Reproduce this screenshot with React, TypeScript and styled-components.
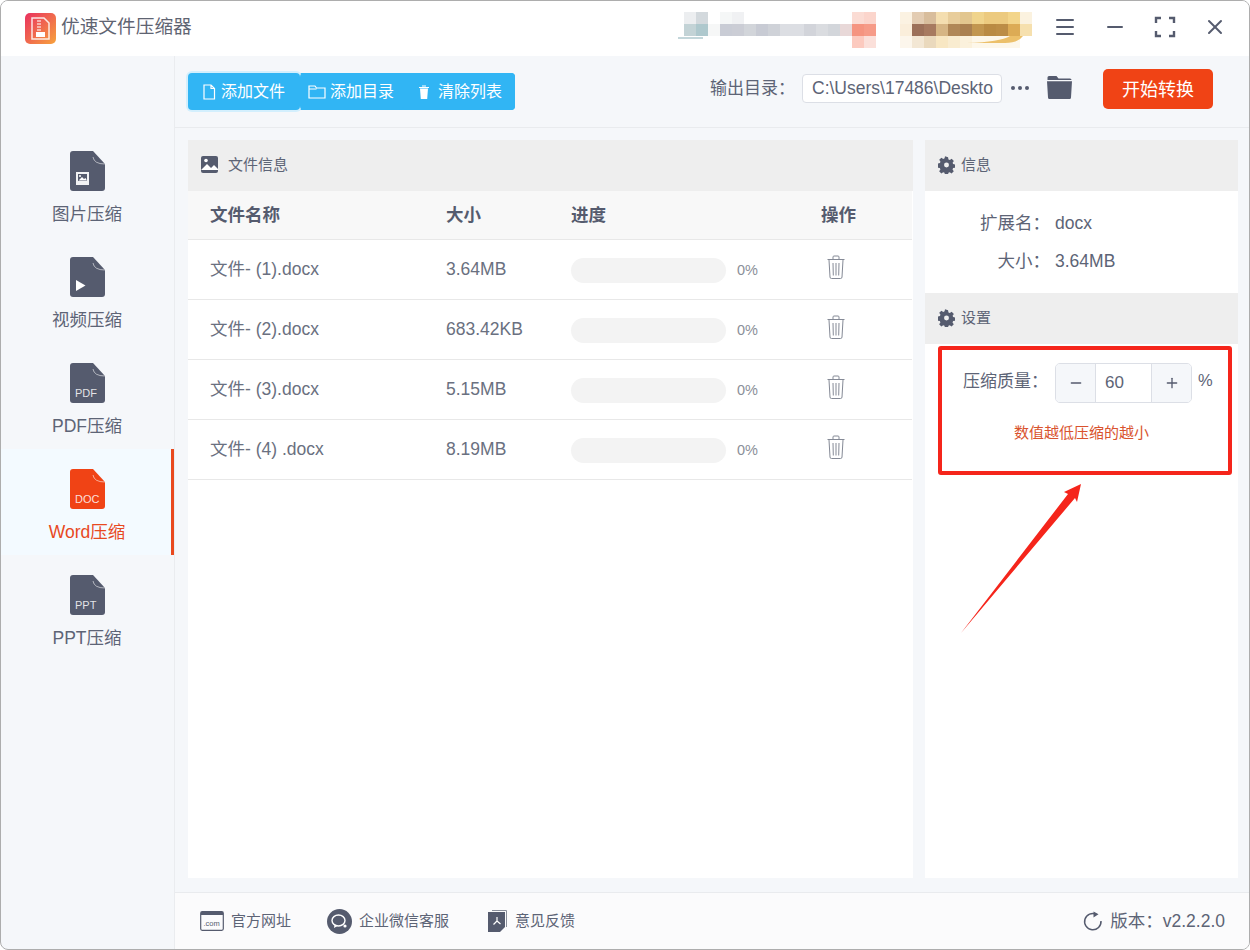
import React from 'react';
import styled, { createGlobalStyle } from 'styled-components';
import { Menu, Minus, X, Plus } from 'lucide-react';

const GlobalStyle = createGlobalStyle`
  html, body {
    margin: 0;
    padding: 0;
    background: #fff;
  }
  body {
    font-family: "Liberation Sans", "Noto Sans CJK SC", sans-serif;
    color: #555b6e;
  }
  * { box-sizing: border-box; }
`;

const Window = styled.div`
  position: relative;
  width: 1250px;
  height: 950px;
  display: flex;
  flex-direction: column;
  overflow: hidden;
  background: #f5f7fa;
  border: 1px solid #adadad;
  border-radius: 8px;
`;

const TitleBar = styled.header`
  height: 55px;
  flex: none;
  display: flex;
  align-items: center;
  background: #fff;
  padding: 0 22px 0 24px;
`;

const Logo = styled.div`
  width: 31px;
  height: 31px;
  flex: none;
  border-radius: 5px;
  display: flex;
  align-items: center;
  justify-content: center;
  background: linear-gradient(135deg, #e9305f, #f7a33d);
`;

const AppName = styled.div`
  margin: 0 0 4px 5px;
  font-size: 18.7px;
  line-height: 26px;
  color: #5f6472;
`;

const Mosaic = styled.svg`
  margin: 3px 0 0 auto;
  flex: none;
`;

const WinControls = styled.div`
  display: flex;
  align-items: center;
  margin: 0 0 3px 13px;
  gap: 26px;
  color: #555b6e;
`;

const Body = styled.div`
  flex: 1;
  display: flex;
  min-height: 0;
`;

const Sidebar = styled.nav`
  width: 174px;
  flex: none;
  padding-top: 75px;
  border-right: 1px solid #eaecef;
`;

const SideItem = styled.div<{ $active?: boolean }>`
  height: 106px;
  display: flex;
  flex-direction: column;
  align-items: center;
  padding: 20px 0 0 2px;
  gap: 10px;
  font-size: 17.5px;
  line-height: 26px;
  color: ${(p) => (p.$active ? '#e8491f' : '#5d6476')};
  background: ${(p) => (p.$active ? '#f3faff' : 'transparent')};
  border-right: 3px solid ${(p) => (p.$active ? '#e9491e' : 'transparent')};
`;

const Content = styled.div`
  flex: 1;
  min-width: 0;
  display: flex;
  flex-direction: column;
`;

const Toolbar = styled.div`
  height: 72px;
  flex: none;
  display: flex;
  align-items: center;
  padding: 0 36px 0 13px;
  border-bottom: 1px solid #e9ebee;
`;

const ButtonGroup = styled.div`
  width: 327px;
  height: 37px;
  display: flex;
  background: #31b5f4;
  border-radius: 4px;
`;

const ToolButton = styled.div<{ $focused?: boolean; $w: number; $left: number; $gap: number }>`
  position: relative;
  width: ${(p) => p.$w}px;
  padding-left: ${(p) => p.$left}px;
  display: flex;
  align-items: center;
  gap: ${(p) => p.$gap}px;
  background: #31b5f4;
  color: #fff;
  font-size: 16px;
  line-height: 22px;
  border-radius: 4px;
  box-shadow: ${(p) => (p.$focused ? '0 0 0 2px #d3effd' : 'none')};
`;

const OutputGroup = styled.div`
  margin: 0 0 6px auto;
  display: flex;
  align-items: center;
`;

const OutputLabel = styled.div`
  font-size: 17px;
  line-height: 24px;
  color: #5d6476;
`;

const PathBox = styled.div`
  width: 200px;
  height: 29px;
  margin-left: 7px;
  padding: 0 9px;
  display: flex;
  align-items: center;
  overflow: hidden;
  white-space: nowrap;
  background: #fff;
  border: 1px solid #dcdfe6;
  border-radius: 4px;
  font-size: 17.5px;
  color: #5d6476;
`;

const Dots = styled.div`
  margin: 0 0 2px 9px;
  display: flex;
  gap: 3px;
`;

const Dot = styled.span`
  width: 4px;
  height: 4px;
  border-radius: 50%;
  background: #555b6e;
`;

const FolderIcon = styled.svg`
  margin: 0 0 2px 18px;
`;

const StartButton = styled.div`
  width: 110px;
  height: 40px;
  margin-left: 31px;
  padding-bottom: 2px;
  display: flex;
  align-items: center;
  justify-content: center;
  background: #f04315;
  border-radius: 5px;
  color: #fff;
  font-size: 18px;
`;

const Panels = styled.div`
  flex: 1;
  min-height: 0;
  display: flex;
  gap: 12px;
  padding: 12px 11px 14px 13px;
`;

const Panel = styled.section<{ $w: number }>`
  width: ${(p) => p.$w}px;
  flex: none;
  background: #fff;
`;

const PanelHeader = styled.div<{ $gap: number; $left: number }>`
  height: 51px;
  display: flex;
  align-items: center;
  gap: ${(p) => p.$gap}px;
  padding: 0 0 2px ${(p) => p.$left}px;
  background: #eeeeee;
  font-size: 15px;
  line-height: 20px;
  color: #5d6476;
`;

const Row = styled.div<{ $head?: boolean }>`
  display: grid;
  grid-template-columns: 236px 125px 250px 1fr;
  align-items: center;
  height: ${(p) => (p.$head ? '49px' : '60px')};
  width: 724px;
  padding: 0 0 ${(p) => (p.$head ? '1px' : '2px')} 22px;
  background: ${(p) => (p.$head ? '#f8f8f8' : '#fff')};
  border-bottom: 1px solid #e8e8e8;
  font-size: 17.5px;
  line-height: 24px;
  font-weight: ${(p) => (p.$head ? 700 : 400)};
  color: ${(p) => (p.$head ? '#555b6e' : '#6a7080')};
`;

const ProgressCell = styled.div`
  display: flex;
  align-items: center;
  gap: 11px;
  margin-top: 2px;
  font-size: 14.5px;
  color: #8b8f99;
`;

const Track = styled.div`
  width: 155px;
  height: 25px;
  margin-top: 2px;
  border-radius: 13px;
  background: #f3f3f3;
`;

const TrashIcon = styled.svg`
  display: block;
  margin: -4px 0 0 6px;
`;

const InfoList = styled.div`
  height: 102px;
  padding-top: 13px;
`;

const InfoRow = styled.div`
  height: 38px;
  display: grid;
  grid-template-columns: 125px 1fr;
  column-gap: 5px;
  align-items: center;
  font-size: 17.5px;
  line-height: 24px;
  color: #5d6476;
`;

const InfoKey = styled.div`
  text-align: right;
`;

const QualityRow = styled.div`
  display: flex;
  align-items: center;
  padding: 19px 0 0 38px;
`;

const QualityLabel = styled.div`
  width: 92px;
  margin-bottom: 2px;
  font-size: 17px;
  line-height: 24px;
  color: #5d6476;
`;

const Stepper = styled.div`
  width: 137px;
  height: 40px;
  display: grid;
  grid-template-columns: 39px 1fr 39px;
  border: 1px solid #dcdfe6;
  border-radius: 5px;
  overflow: hidden;
`;

const StepButton = styled.div`
  display: flex;
  align-items: center;
  justify-content: center;
  background: #f5f7fa;
  color: #555b6e;
`;

const StepValue = styled.div`
  padding-left: 9px;
  display: flex;
  align-items: center;
  border-left: 1px solid #dcdfe6;
  border-right: 1px solid #dcdfe6;
  font-size: 17px;
  color: #5d6476;
`;

const Percent = styled.div`
  margin: 0 0 5px 6px;
  font-size: 16.5px;
  color: #5d6476;
`;

const Hint = styled.div`
  margin: 20px 0 0 89px;
  font-size: 15px;
  line-height: 20px;
  color: #d9532e;
`;

const Callout = styled.div`
  position: absolute;
  left: 937px;
  top: 345px;
  width: 294px;
  height: 129px;
  border: 4px solid #f5251b;
  border-radius: 3px;
`;

const Arrow = styled.svg`
  position: absolute;
  left: 955px;
  top: 480px;
`;

const Footer = styled.footer`
  height: 57px;
  flex: none;
  display: flex;
  align-items: center;
  padding: 0 24px 0 25px;
  background: #fbfbfc;
  border-top: 1px solid #e9ebee;
  font-size: 15px;
  line-height: 20px;
  color: #5d6476;
`;

const FooterLink = styled.div<{ $gap: number }>`
  display: flex;
  align-items: center;
  gap: 7px;
  margin-right: ${(p) => p.$gap}px;
`;

const Version = styled.div`
  margin-left: auto;
  display: flex;
  align-items: center;
  gap: 7px;
  font-size: 17.5px;
`;

const FileIcon = ({ color = '#555b6e', children }: { color?: string; children?: React.ReactNode }) => (
  <svg width="35" height="40" viewBox="0 0 35 40">
    <path
      d="M3 0H23L35 13V37a3 3 0 0 1-3 3H3a3 3 0 0 1-3-3V3a3 3 0 0 1 3-3Z"
      fill={color}
    />
    <path d="M23 6Q24 13 35 13" fill="none" stroke="#fff" strokeOpacity=".55" strokeWidth="1" />
    {children}
  </svg>
);

const FileLabel = styled.text`
  font-family: "Liberation Sans", sans-serif;
  font-size: 11px;
  fill: #fff;
  fill-opacity: 0.85;
`;

const navItems = [
  {
    label: '图片压缩',
    glyph: (
      <>
        <rect x="6" y="21" width="13" height="13" fill="#fff" fillOpacity=".92" />
        <path d="M8 23H17V30H8Z" fill="#555b6e" />
        <path d="M8.500 29.500 12 26l2 2 1.500-1 1.500 2.500Z" fill="#fff" />
        <circle cx="10" cy="25" r="1" fill="#fff" />
      </>
    ),
  },
  { label: '视频压缩', glyph: <path d="M6 23 15.500 28.500 6 34Z" fill="#fff" /> },
  { label: 'PDF压缩', glyph: <FileLabel x="5" y="34">PDF</FileLabel> },
  { label: 'Word压缩', glyph: <FileLabel x="5" y="34">DOC</FileLabel>, active: true },
  { label: 'PPT压缩', glyph: <FileLabel x="5" y="34">PPT</FileLabel> },
];

const files = [
  { name: '文件- (1).docx', size: '3.64MB' },
  { name: '文件- (2).docx', size: '683.42KB' },
  { name: '文件- (3).docx', size: '5.15MB' },
  { name: '文件- (4) .docx', size: '8.19MB' },
];

// blurred-out account info in the title bar: [x, row, colour], 12px cells
const mosaicCells: [number, number, string][] = [
  [24, 0, '#eceef0'],
  [36, 0, '#d3d9dd'],
  [60, 0, '#f5f7f7'],
  [72, 0, '#f0f1f3'],
  [24, 1, '#c3d3d6'],
  [36, 1, '#aec8cd'],
  [48, 1, '#f6f7f7'],
  [60, 1, '#c9ccd5'],
  [72, 1, '#cbcdd5'],
  [84, 1, '#d2d5da'],
  [96, 1, '#c8cbd4'],
  [108, 1, '#cfd2d8'],
  [120, 1, '#dcdee3'],
  [132, 1, '#dcdee3'],
  [144, 1, '#d2d4da'],
  [156, 1, '#dadce0'],
  [168, 1, '#d3d6db'],
  [180, 1, '#e8d8d8'],
  [192, 0, '#fbdcd4'],
  [204, 0, '#fbd5cc'],
  [192, 1, '#f59480'],
  [204, 1, '#f69b88'],
  [192, 2, '#fccabf'],
  [204, 2, '#fbe0da'],
  [240, 0, '#fbf2e2'],
  [252, 0, '#e3ccb2'],
  [264, 0, '#d8bd9c'],
  [276, 0, '#f4deb0'],
  [288, 0, '#e8cd9b'],
  [300, 0, '#e2c68f'],
  [312, 0, '#f0d48c'],
  [324, 0, '#ecca7f'],
  [336, 0, '#ecca7f'],
  [348, 0, '#f3d58a'],
  [360, 0, '#fbf2df'],
  [240, 1, '#faeedb'],
  [252, 1, '#9c7059'],
  [264, 1, '#a77a60'],
  [276, 1, '#d6b584'],
  [288, 1, '#b08757'],
  [300, 1, '#aa8050'],
  [312, 1, '#c2964f'],
  [324, 1, '#b98a43'],
  [336, 1, '#bc8d46'],
  [348, 1, '#dcab55'],
  [360, 1, '#f6e0ae'],
  [240, 2, '#fcf6ec'],
  [252, 2, '#f3e7d4'],
  [264, 2, '#ead9bd'],
  [276, 2, '#f8e7c3'],
  [288, 2, '#f9ecd0'],
  [300, 2, '#fbf1dc'],
  [312, 2, '#fdf7ea'],
  [324, 2, '#fdf7ea'],
  [336, 2, '#fdf7ea'],
  [348, 2, '#fdf7ea'],
];

const GearIcon = () => (
  <svg width="17" height="18" viewBox="0 0 24 24" preserveAspectRatio="xMidYMid meet">
    <path
      fillRule="evenodd"
      fill="#555b6e"
      d="M14.2 1l.6 3.100 1.900.8 2.600-1.800 3.100 3.100-1.800 2.600.8 1.900 3 .6v4.400l-3.100.6-.8 1.900 1.800 2.600-3.100 3.100-2.600-1.800-1.900.8-.6 3.100H9.800l-.6-3.100-1.900-.8-2.600 1.800-3.100-3.100 1.800-2.600-.8-1.900-3-.6V9.800l3.100-.6.8-1.900-1.800-2.600 3.100-3.100 2.600 1.800 1.900-.8.6-3.100ZM12 8.500a3.500 3.500 0 1 0 0 7 3.500 3.500 0 0 0 0-7Z"
    />
  </svg>
);

const App = () => (
  <>
    <GlobalStyle />
    <Window>
      <TitleBar>
        <Logo>
          <svg width="21" height="23" viewBox="0 0 21 23">
            <path d="M2 1H14L19 6V22H2Z" fill="none" stroke="#fff" strokeOpacity=".85" strokeWidth="1.500" />
            <path d="M7 4H11M7 7H11M7 10H11M7 13H11" stroke="#fff" strokeOpacity=".7" strokeWidth="1.500" />
            <rect x="6" y="15" width="9" height="5" fill="#fff" />
          </svg>
        </Logo>
        <AppName>优速文件压缩器</AppName>
        <Mosaic width="380" height="50" viewBox="0 0 380 50">
          {mosaicCells.map(([x, row, fill], i) => (
            <rect key={i} x={x} y={7 + row * 12} width="12" height="12" fill={fill} />
          ))}
          <path d="M307 38Q340 37 350 31H363Q358 38 345 38Z" fill="#ecc06a" />
          <rect x="18" y="32" width="25" height="2" fill="#c3d6da" />
        </Mosaic>
        <WinControls>
          <Menu size={24} strokeWidth={2} />
          <Minus size={24} strokeWidth={2} />
          <svg width="24" height="24" viewBox="0 0 24 24" fill="none" stroke="#555b6e" strokeWidth="2.400">
            <path d="M8 3H3V8M16 3H21V8M3 16V21H8M21 16V21H16" />
          </svg>
          <X size={24} strokeWidth={2} />
        </WinControls>
      </TitleBar>
      <Body>
        <Sidebar>
          {navItems.map((item) => (
            <SideItem key={item.label} $active={item.active}>
              <FileIcon color={item.active ? '#f04315' : '#555b6e'}>{item.glyph}</FileIcon>
              {item.label}
            </SideItem>
          ))}
        </Sidebar>
        <Content>
          <Toolbar>
            <ButtonGroup>
              <ToolButton $w={112} $left={14} $gap={5} $focused>
                <svg width="14" height="16" viewBox="0 0 14 16" fill="none" stroke="#fff" strokeWidth="1.200">
                  <path d="M2 1H9L12.500 4.500V15H2ZM9 1V4.500H12.500" />
                </svg>
                添加文件
              </ToolButton>
              <ToolButton $w={103} $left={8} $gap={4}>
                <svg width="18" height="16" viewBox="0 0 18 16" fill="none" stroke="#fff" strokeWidth="1.200">
                  <path d="M1 2H7L8.500 4H17V14H1ZM1 5H8.500" />
                </svg>
                添加目录
              </ToolButton>
              <ToolButton $w={112} $left={14} $gap={7}>
                <svg width="14" height="16" viewBox="0 0 14 16" fill="#fff">
                  <path d="M3 4.500H11L10.200 15H3.800ZM2 3H12V4H2ZM5 1.500H9V2.500H5Z" />
                </svg>
                清除列表
              </ToolButton>
            </ButtonGroup>
            <OutputGroup>
              <OutputLabel>输出目录：</OutputLabel>
              <PathBox>C:\Users\17486\Deskto</PathBox>
              <Dots>
                <Dot />
                <Dot />
                <Dot />
              </Dots>
              <FolderIcon width="25" height="23" viewBox="0 0 25 23" fill="#555b6e">
                <path d="M2 0H9.500L11.500 2.500H23a1.500 1.500 0 0 1 1.500 1.500H.5V1.500A1.500 1.500 0 0 1 2 0Z" />
                <path d="M0 5.200H25L24 21.500a1.500 1.500 0 0 1-1.500 1.500H2.500A1.500 1.500 0 0 1 1 21.500Z" />
              </FolderIcon>
              <StartButton>开始转换</StartButton>
            </OutputGroup>
          </Toolbar>
          <Panels>
            <Panel $w={725}>
              <PanelHeader $gap={10} $left={13}>
                <svg width="17" height="18" viewBox="0 0 17 18">
                  <rect x="0" y="0" width="17" height="17" rx="2" fill="#555b6e" />
                  <circle cx="5" cy="4.500" r="1.800" fill="#fff" />
                  <path d="M0 14 6 8l4 4 3-3 4 4v1H0Z" fill="#fff" />
                </svg>
                文件信息
              </PanelHeader>
              <Row $head>
                <div>文件名称</div>
                <div>大小</div>
                <div>进度</div>
                <div>操作</div>
              </Row>
              {files.map((f) => (
                <Row key={f.name}>
                  <div>{f.name}</div>
                  <div>{f.size}</div>
                  <ProgressCell>
                    <Track />
                    0%
                  </ProgressCell>
                  <TrashIcon width="18" height="24" viewBox="0 0 18 24" fill="none" stroke="#858a96" strokeWidth="1">
                    <path d="M.5 4.500H17.500M2 5 3 22a1.500 1.500 0 0 0 1.500 1.500h9A1.500 1.500 0 0 0 15 22L16 5M6 4.500V2a1 1 0 0 1 1-1h4a1 1 0 0 1 1 1v2.500M6 8 6.300 20.500M9 8V20.500M12 8 11.700 20.500" />
                  </TrashIcon>
                </Row>
              ))}
            </Panel>
            <Panel $w={313}>
              <PanelHeader $gap={6} $left={13}>
                <GearIcon />
                信息
              </PanelHeader>
              <InfoList>
                <InfoRow>
                  <InfoKey>扩展名：</InfoKey>
                  <div>docx</div>
                </InfoRow>
                <InfoRow>
                  <InfoKey>大小：</InfoKey>
                  <div>3.64MB</div>
                </InfoRow>
              </InfoList>
              <PanelHeader $gap={6} $left={13}>
                <GearIcon />
                设置
              </PanelHeader>
              <QualityRow>
                <QualityLabel>压缩质量：</QualityLabel>
                <Stepper>
                  <StepButton>
                    <Minus size={16} strokeWidth={2} />
                  </StepButton>
                  <StepValue>60</StepValue>
                  <StepButton>
                    <Plus size={16} strokeWidth={2} />
                  </StepButton>
                </Stepper>
                <Percent>%</Percent>
              </QualityRow>
              <Hint>数值越低压缩的越小</Hint>
            </Panel>
          </Panels>
          <Footer>
            <FooterLink $gap={36}>
              <svg width="24" height="20" viewBox="0 0 24 20">
                <rect x=".7" y=".7" width="22.600" height="18.600" rx="1.500" fill="none" stroke="#555b6e" strokeWidth="1.200" />
                <rect x="1" y="1" width="22" height="3" fill="#555b6e" />
                <text x="3.500" y="15" fontSize="7.500" fontFamily="Liberation Sans" fill="#555b6e">.com</text>
              </svg>
              官方网址
            </FooterLink>
            <FooterLink $gap={38}>
              <svg width="25" height="25" viewBox="0 0 25 25">
                <circle cx="12.500" cy="12.500" r="12.500" fill="#555b6e" />
                <ellipse cx="11.500" cy="11.500" rx="6.500" ry="5.500" fill="none" stroke="#fff" strokeWidth="1.400" />
                <path d="M7.500 15.500 7 19l3.500-2Z" fill="#fff" />
                <circle cx="18" cy="17" r="1.600" fill="#fff" />
              </svg>
              企业微信客服
            </FooterLink>
            <FooterLink $gap={0}>
              <svg width="21" height="24" viewBox="0 0 21 24">
                <path d="M5 1.500H19.500V18" fill="none" stroke="#8a8f9b" strokeWidth="1" />
                <path d="M1 3H18V18L13 23H1Z" fill="#555b6e" />
                <path d="M10 8V12M10 12 6.500 15.500M10 12l3.500 3" fill="none" stroke="#fff" strokeWidth="1.200" />
              </svg>
              意见反馈
            </FooterLink>
            <Version>
              <svg width="20" height="20" viewBox="0 0 20 20" fill="none" stroke="#555b6e" strokeWidth="1.500">
                <path d="M13.500 3.300A8.200 8.200 0 1 0 18 10" />
                <path d="M10.500 0.500 15.500 3.300 10.500 6.500Z" fill="#555b6e" stroke="none" />
              </svg>
              版本：v2.2.2.0
            </Version>
          </Footer>
        </Content>
      </Body>
      <Callout />
      <Arrow width="135" height="160" viewBox="0 0 135 160">
        <path d="M5 152 112 13 108 11 125 3 121 21 119 17Z" fill="#f5251b" />
      </Arrow>
    </Window>
  </>
);

export default App;
